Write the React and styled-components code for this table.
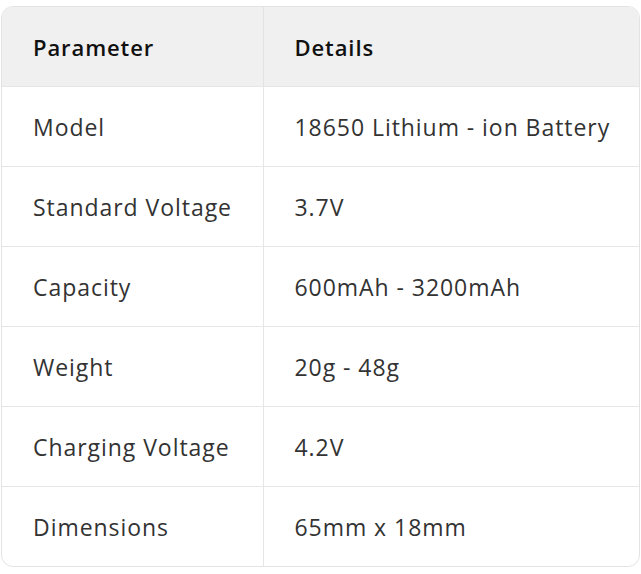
import React from "react";
import styled, { createGlobalStyle } from "styled-components";

const rows = [
  ["Model", "18650 Lithium - ion Battery"],
  ["Standard Voltage", "3.7V"],
  ["Capacity", "600mAh - 3200mAh"],
  ["Weight", "20g - 48g"],
  ["Charging Voltage", "4.2V"],
  ["Dimensions", "65mm x 18mm"],
];

const GlobalStyle = createGlobalStyle`
  body {
    margin: 0;
    background: #fff;
    font-family: "Open Sans", "Noto Sans", sans-serif;
  }
`;

const Page = styled.div`
  padding: 6px 1px 0 1px;
`;

const Wrap = styled.div`
  border: 1px solid #e3e3e3;
  border-radius: 12px;
  overflow: hidden;
`;

const Table = styled.table`
  width: 100%;
  border-collapse: collapse;
  table-layout: fixed;
`;

const Col = styled.col`
  width: ${(p) => p.$w};
`;

const HeadCell = styled.th`
  height: 79px;
  padding: 0 0 0 31px;
  background: #f0f0f0;
  text-align: left;
  font-size: 22px;
  font-weight: 600;
  letter-spacing: 0.9px;
  color: #111;
  border-right: 1px solid #e3e3e3;
  &:last-child {
    border-right: none;
  }
`;

const Cell = styled.td`
  height: 79px;
  padding: 0 0 0 31px;
  font-size: 23px;
  letter-spacing: 0.95px;
  color: #333;
  border-top: 1px solid #e6e6e6;
  border-right: 1px solid #e6e6e6;
  white-space: nowrap;
  &:last-child {
    border-right: none;
  }
`;

export default function App() {
  return (
    <>
      <GlobalStyle />
      <Page>
        <Wrap>
          <Table>
            <colgroup>
              <Col $w="261px" />
              <Col $w="auto" />
            </colgroup>
            <thead>
              <tr>
                <HeadCell>Parameter</HeadCell>
                <HeadCell>Details</HeadCell>
              </tr>
            </thead>
            <tbody>
              {rows.map(([k, v]) => (
                <tr key={k}>
                  <Cell>{k}</Cell>
                  <Cell>{v}</Cell>
                </tr>
              ))}
            </tbody>
          </Table>
        </Wrap>
      </Page>
    </>
  );
}
